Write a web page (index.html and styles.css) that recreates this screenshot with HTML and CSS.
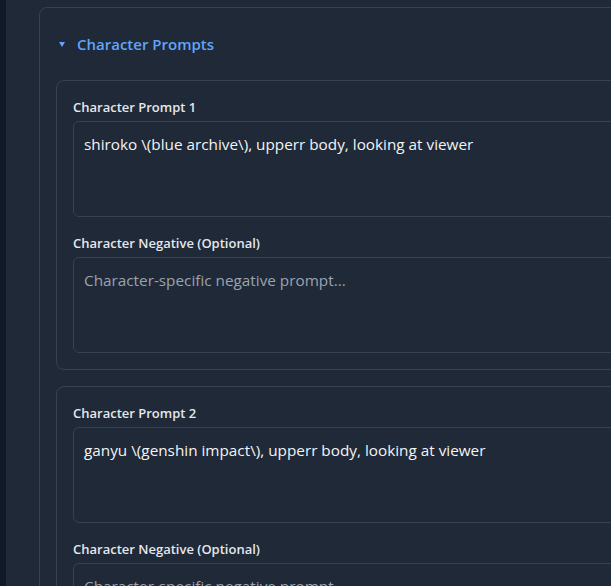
FILE: index.html
```html
<!DOCTYPE html>
<html lang="en">
<head>
<meta charset="utf-8">
<title>Character Prompts</title>
<link rel="stylesheet" href="styles.css">
</head>
<body>
<div class="layout">
  <aside class="sidebar"></aside>
  <main class="main">
    <section class="panel">
      <div class="panel-header">
        <span class="caret"></span>
        <span class="panel-title">Character Prompts</span>
      </div>
      <div class="cards">
        <div class="card">
          <label class="field-label">Character Prompt 1</label>
          <textarea class="field">shiroko \(blue archive\), upperr body, looking at viewer</textarea>
          <label class="field-label spaced">Character Negative (Optional)</label>
          <textarea class="field" placeholder="Character-specific negative prompt..."></textarea>
        </div>
        <div class="card">
          <label class="field-label">Character Prompt 2</label>
          <textarea class="field">ganyu \(genshin impact\), upperr body, looking at viewer</textarea>
          <label class="field-label spaced">Character Negative (Optional)</label>
          <textarea class="field" placeholder="Character-specific negative prompt..."></textarea>
        </div>
      </div>
    </section>
  </main>
</div>
</body>
</html>
```
FILE: styles.css
```css
html, body {
  margin: 0;
  padding: 0;
  height: 100%;
  overflow: hidden;
  background: #1f2937;
  font-family: "Open Sans", "Noto Sans", sans-serif;
}

.layout {
  display: flex;
  min-height: 100%;
  width: 760px;
}

.sidebar {
  width: 6px;
  flex: none;
  background: #111827;
}

.main {
  flex: 1;
  padding: 7px 0 0 33px;
}

.panel {
  border: 1px solid #374151;
  border-radius: 8px;
  padding: 0 16px;
  background: #1f2937;
}

.panel-header {
  display: flex;
  align-items: center;
  height: 20px;
  padding: 26px 0 0 3px;
  margin-bottom: 26px;
}

.caret {
  width: 0;
  height: 0;
  border-left: 3px solid transparent;
  border-right: 3px solid transparent;
  border-top: 5px solid #60a5fa;
  margin-right: 12px;
}

.panel-title {
  color: #60a5fa;
  font-size: 15px;
  font-weight: 600;
  line-height: 20px;
}

.cards {
  display: flex;
  flex-direction: column;
  gap: 16px;
}

.card {
  border: 1px solid #374151;
  border-radius: 8px;
  padding: 16px;
  display: flex;
  flex-direction: column;
}

.field-label {
  color: #e5e7eb;
  font-size: 13px;
  font-weight: 600;
  line-height: 20px;
  margin-bottom: 4px;
}

.field-label.spaced {
  margin-top: 16px;
}

.field {
  box-sizing: border-box;
  height: 96px;
  resize: none;
  background: #1f2937;
  border: 1px solid #374151;
  border-radius: 6px;
  color: #f3f4f6;
  font-family: "Open Sans", "Noto Sans", sans-serif;
  font-size: 15.3px;
  line-height: 22px;
  padding: 11px 10px;
  outline: none;
  overflow: hidden;
}

.field::placeholder {
  color: #9ca3af;
  opacity: 1;
}
```
